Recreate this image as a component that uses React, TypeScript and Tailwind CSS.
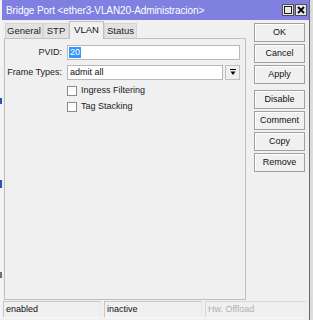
import React from "react";

const font = { fontFamily: '"Liberation Sans", Arial, sans-serif' };

function Btn({ label, className = "" }: { label: string; className?: string }) {
  return (
    <div
      className={`h-[19px] w-[51px] flex items-center justify-center border border-[#a0a0a0] bg-[#f0f0f0] text-[9px] text-[#111] shadow-[inset_1px_1px_0_#fff] ${className}`}
    >
      {label}
    </div>
  );
}

function Tab({ label, active = false, w }: { label: string; active?: boolean; w: string }) {
  return active ? (
    <div className={`${w} h-[18px] -mb-px flex items-center justify-center border border-b-0 border-[#c0c0c0] bg-[#f0f0f0] text-[9.5px] text-[#111] z-10`}>
      {label}
    </div>
  ) : (
    <div className={`${w} h-[15px] flex items-center justify-center border border-b-0 border-[#d4d4d4] bg-[#e2e2e2] text-[9.5px] text-[#222]`}>
      {label}
    </div>
  );
}

export default function App() {
  return (
    <div className="w-[313px] h-[320px] flex bg-[#e8ecf0] overflow-hidden" style={font}>
      <div className="w-[2px] h-full bg-[#f4f4f4] flex flex-col">
        <div className="h-[98px]" />
        <div className="h-[6px] bg-[#3050c0]" />
        <div className="h-[76px]" />
        <div className="h-[8px] bg-[#3050c0]" />
        <div className="h-[84px]" />
        <div className="h-[6px] bg-[#707070]" />
      </div>
      <div className="w-[308px] h-full flex flex-col bg-[#f0f0f0] border-r border-[#6a6a6a]">
        <div className="h-[20px] bg-[#8080e0] flex items-center pl-[4px] pr-[2px]">
          <span className="text-[10px] text-white flex-1 tracking-[-0.1px]">
            Bridge Port &lt;ether3-VLAN20-Administracion&gt;
          </span>
          <div className="w-[12px] h-[12px] bg-[#e8e8e8] border border-[#505050] flex items-center justify-center">
            <div className="w-[8px] h-[8px] border border-[#202020]" />
          </div>
          <div className="w-[12px] h-[12px] ml-[1px] bg-[#e8e8e8] border border-[#505050] flex items-center justify-center">
            <svg width="8" height="8" viewBox="0 0 8 8">
              <path d="M1 1 L7 7 M7 1 L1 7" stroke="#000" strokeWidth="1.8" />
            </svg>
          </div>
        </div>
        <div className="flex flex-1 pl-[2px]">
          <div className="w-[242px] flex flex-col pt-[3px]">
            <div className="flex items-end pl-[1px] h-[15px]">
              <Tab label="General" w="w-[38px]" />
              <Tab label="STP" w="w-[26px]" />
              <Tab label="VLAN" w="w-[35px]" active />
              <Tab label="Status" w="w-[33px]" />
            </div>
            <div className="flex-1 border border-[#c0c0c0] bg-[#f0f0f0]">
              <div className="flex items-center mt-[6px] h-[15px]">
                <div className="w-[57px] text-right text-[9px] text-[#222] whitespace-nowrap">PVID:</div>
                <div className="ml-[5px] w-[173px] h-[15px] bg-white border border-[#b8b8b8] flex items-center pl-[1px]">
                  <span className="bg-[#3399ff] text-white text-[9px] leading-[11px] px-[1px]">20</span>
                </div>
              </div>
              <div className="flex items-center mt-[5px] h-[15px]">
                <div className="w-[57px] text-right text-[9px] text-[#222] whitespace-nowrap">Frame Types:</div>
                <div className="ml-[5px] w-[156px] h-[15px] bg-white border border-[#b8b8b8] flex items-center pl-[2px] text-[9px] text-[#111]">
                  admit all
                </div>
                <div className="ml-[2px] w-[15px] h-[15px] border border-[#c0c0c0] bg-[#f0f0f0] flex items-center justify-center">
                  <svg width="6" height="7" viewBox="0 0 6 7">
                    <path d="M0 0.5 H6" stroke="#000" strokeWidth="1" />
                    <path d="M0.5 2.5 H5.5 L3 6 Z" fill="#000" />
                  </svg>
                </div>
              </div>
              <div className="flex items-center mt-[5px] ml-[62px] h-[11px]">
                <div className="w-[10px] h-[10px] bg-white border border-[#8a8a8a]" />
                <span className="ml-[4px] text-[9px] text-[#222]">Ingress Filtering</span>
              </div>
              <div className="flex items-center mt-[5px] ml-[62px] h-[11px]">
                <div className="w-[10px] h-[10px] bg-white border border-[#8a8a8a]" />
                <span className="ml-[4px] text-[9px] text-[#222]">Tag Stacking</span>
              </div>
            </div>
          </div>
          <div className="ml-[8px] flex flex-col pt-[3px]">
            <Btn label="OK" />
            <Btn label="Cancel" className="mt-[2px]" />
            <Btn label="Apply" className="mt-[2px]" />
            <Btn label="Disable" className="mt-[6px]" />
            <Btn label="Comment" className="mt-[2px]" />
            <Btn label="Copy" className="mt-[2px]" />
            <Btn label="Remove" className="mt-[2px]" />
          </div>
        </div>
        <div className="h-[20px] flex items-start pt-[1px] pl-[1px] gap-[3px]">
          <div className="w-[98px] h-[17px] border border-[#c8c8c8] border-r-[#e8e8e8] border-b-[#fafafa] flex items-center pl-[2px] text-[9px] text-[#111]">enabled</div>
          <div className="w-[98px] h-[17px] border border-[#c8c8c8] border-r-[#e8e8e8] border-b-[#fafafa] flex items-center pl-[2px] text-[9px] text-[#111]">inactive</div>
          <div className="w-[101px] h-[17px] border border-[#d8d8d8] border-r-[#ececec] border-b-[#fafafa] flex items-center pl-[2px] text-[9px] text-[#b0b0b0]">Hw. Offload</div>
        </div>
      </div>
      <div className="flex-1 h-full bg-[#dcdcdc]" />
    </div>
  );
}
